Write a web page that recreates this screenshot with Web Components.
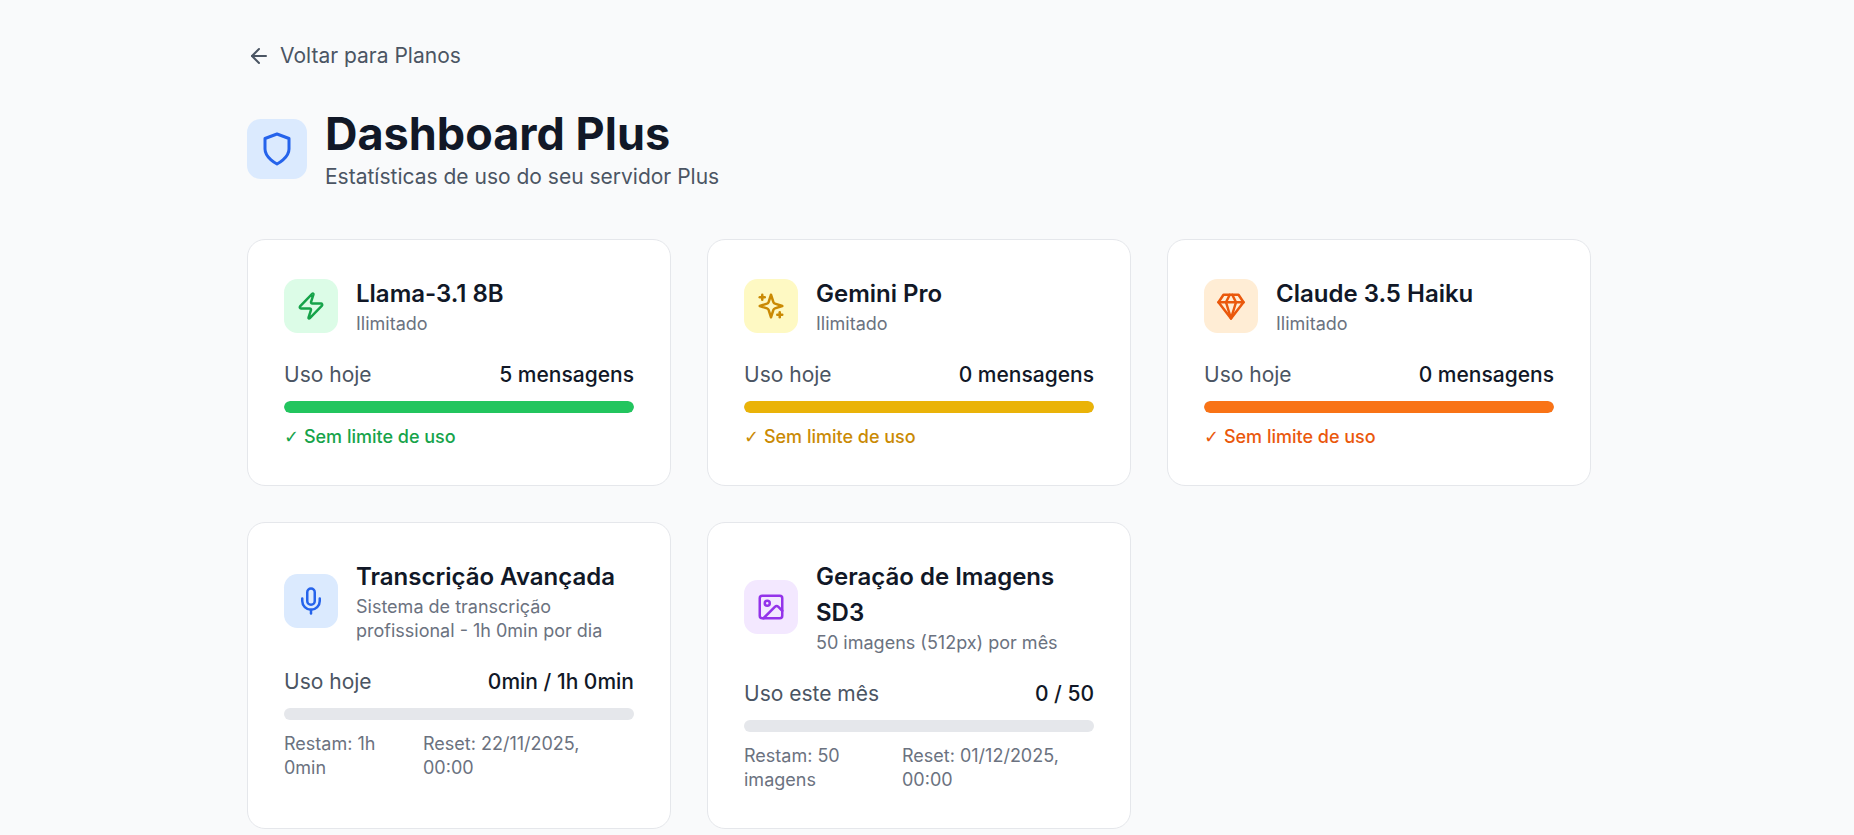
<!DOCTYPE html>
<html lang="pt-BR">

<head>
  <meta charset="UTF-8">
  <title>Dashboard Plus</title>
  <style>
    html, body { margin: 0; background: #f9fafb; }
    body { font-family: Inter, "Liberation Sans", sans-serif; color: #111827; }
  </style>
</head>

<body>
  <template id="icons">
    <svg data-name="arrow" viewBox="0 0 24 24"><path d="m12 19-7-7 7-7"/><path d="M19 12H5"/></svg>
    <svg data-name="shield" viewBox="0 0 24 24"><path d="M12 22s8-4 8-10V5l-8-3-8 3v7c0 6 8 10 8 10z"/></svg>
    <svg data-name="zap" viewBox="0 0 24 24"><path d="M4 14a1 1 0 0 1-.78-1.63l9.9-10.2a.5.5 0 0 1 .86.46l-1.92 6.02A1 1 0 0 0 13 10h7a1 1 0 0 1 .78 1.63l-9.9 10.2a.5.5 0 0 1-.86-.46l1.92-6.02A1 1 0 0 0 11 14z"/></svg>
    <svg data-name="sparkles" viewBox="0 0 24 24"><path d="m12 3-1.912 5.813a2 2 0 0 1-1.275 1.275L3 12l5.813 1.912a2 2 0 0 1 1.275 1.275L12 21l1.912-5.813a2 2 0 0 1 1.275-1.275L21 12l-5.813-1.912a2 2 0 0 1-1.275-1.275L12 3Z"/><path d="M5 3v4"/><path d="M19 17v4"/><path d="M3 5h4"/><path d="M17 19h4"/></svg>
    <svg data-name="gem" viewBox="0 0 24 24"><path d="M6 3h12l4 6-10 13L2 9Z"/><path d="M11 3 8 9l4 13 4-13-3-6"/><path d="M2 9h20"/></svg>
    <svg data-name="mic" viewBox="0 0 24 24"><path d="M12 2a3 3 0 0 0-3 3v7a3 3 0 0 0 6 0V5a3 3 0 0 0-3-3Z"/><path d="M19 10v2a7 7 0 0 1-14 0v-2"/><path d="M12 19v3"/></svg>
    <svg data-name="image" viewBox="0 0 24 24"><rect x="3" y="3" width="18" height="18" rx="2"/><circle cx="9" cy="9" r="2"/><path d="m21 15-3.086-3.086a2 2 0 0 0-2.828 0L6 21"/></svg>
  </template>

  <plus-dashboard>
    <back-link>Voltar para Planos</back-link>
    <page-header heading="Dashboard Plus">Estatísticas de uso do seu servidor Plus</page-header>
    <card-grid>
      <usage-card icon="zap" color="green" heading="Llama-3.1 8B" detail="Ilimitado" label="Uso hoje" value="5 mensagens" fill="100" note="Sem limite de uso"></usage-card>
      <usage-card icon="sparkles" color="yellow" heading="Gemini Pro" detail="Ilimitado" label="Uso hoje" value="0 mensagens" fill="100" note="Sem limite de uso"></usage-card>
      <usage-card icon="gem" color="orange" heading="Claude 3.5 Haiku" detail="Ilimitado" label="Uso hoje" value="0 mensagens" fill="100" note="Sem limite de uso"></usage-card>
      <usage-card icon="mic" color="blue" heading="Transcrição Avançada" detail="Sistema de transcrição profissional - 1h 0min por dia" label="Uso hoje" value="0min / 1h 0min" fill="0" left="Restam: 1h 0min" reset="Reset: 22/11/2025, 00:00" left-width="139"></usage-card>
      <usage-card icon="image" color="purple" heading="Geração de Imagens SD3" detail="50 imagens (512px) por mês" label="Uso este mês" value="0 / 50" fill="0" left="Restam: 50 imagens" reset="Reset: 01/12/2025, 00:00" left-width="158"></usage-card>
    </card-grid>
  </plus-dashboard>

  <script>
    const iconSource = document.getElementById('icons').content;

    function iconMarkup(name) {
      return iconSource.querySelector(`[data-name="${name}"]`).outerHTML;
    }

    class PlusDashboard extends HTMLElement {
      constructor() {
        super();
        const shadow = this.attachShadow({ mode: 'open' });
        shadow.innerHTML = `
          <style>
            :host {
              display: flex;
              flex-direction: column;
              width: 1344px;
              margin-left: 247px;
              padding-top: 42px;
            }
          </style>
          <slot></slot>
        `;
      }
    }

    class BackLink extends HTMLElement {
      constructor() {
        super();
        const shadow = this.attachShadow({ mode: 'open' });
        shadow.innerHTML = `
          <style>
            :host {
              display: flex;
              align-items: center;
              gap: 9px;
              height: 27px;
              font-size: 21px;
              color: #4b5563;
            }
            svg {
              width: 24px;
              height: 24px;
              fill: none;
              stroke: currentColor;
              stroke-width: 2;
              stroke-linecap: round;
              stroke-linejoin: round;
            }
          </style>
          ${iconMarkup('arrow')}
          <slot></slot>
        `;
      }
    }

    class PageHeader extends HTMLElement {
      constructor() {
        super();
        const shadow = this.attachShadow({ mode: 'open' });
        shadow.innerHTML = `
          <style>
            :host {
              display: flex;
              align-items: center;
              gap: 18px;
              margin-top: 38px;
              margin-bottom: 49px;
            }
            .tile {
              display: flex;
              align-items: center;
              justify-content: center;
              width: 60px;
              height: 60px;
              border-radius: 13.5px;
              background: #dbeafe;
              color: #2563eb;
            }
            svg {
              width: 36px;
              height: 36px;
              fill: none;
              stroke: currentColor;
              stroke-width: 2;
              stroke-linecap: round;
              stroke-linejoin: round;
            }
            h1 {
              margin: 0 0 2px;
              font-size: 45px;
              line-height: 54px;
              font-weight: 700;
              color: #111827;
            }
            p {
              margin: 0;
              font-size: 21px;
              line-height: 27px;
              color: #4b5563;
            }
          </style>
          <div class="tile">${iconMarkup('shield')}</div>
          <div>
            <h1></h1>
            <p><slot></slot></p>
          </div>
        `;
        shadow.querySelector('h1').textContent = this.getAttribute('heading');
      }
    }

    class CardGrid extends HTMLElement {
      constructor() {
        super();
        const shadow = this.attachShadow({ mode: 'open' });
        shadow.innerHTML = `
          <style>
            :host {
              display: grid;
              grid-template-columns: repeat(3, 1fr);
              gap: 36px;
            }
          </style>
          <slot></slot>
        `;
      }
    }

    const palette = {
      green: { tile: '#dcfce7', ink: '#16a34a', bar: '#22c55e' },
      yellow: { tile: '#fef9c3', ink: '#ca8a04', bar: '#eab308' },
      orange: { tile: '#ffedd5', ink: '#ea580c', bar: '#f97316' },
      blue: { tile: '#dbeafe', ink: '#2563eb', bar: '#3b82f6' },
      purple: { tile: '#f3e8ff', ink: '#9333ea', bar: '#a855f7' }
    };

    class UsageCard extends HTMLElement {
      constructor() {
        super();
        const shadow = this.attachShadow({ mode: 'open' });
        const colors = palette[this.getAttribute('color')];
        shadow.innerHTML = `
          <style>
            :host {
              display: flex;
              flex-direction: column;
              box-sizing: border-box;
              padding: 36px;
              background: #fff;
              border: 1px solid #e5e7eb;
              border-radius: 18px;
              --ink: ${colors.ink};
            }
            .head {
              display: flex;
              align-items: center;
              gap: 18px;
              margin-bottom: 25px;
            }
            .tile {
              flex: none;
              display: flex;
              align-items: center;
              justify-content: center;
              width: 54px;
              height: 54px;
              border-radius: 13.5px;
              background: ${colors.tile};
              color: var(--ink);
            }
            svg {
              width: 30px;
              height: 30px;
              fill: none;
              stroke: currentColor;
              stroke-width: 2;
              stroke-linecap: round;
              stroke-linejoin: round;
            }
            h3 {
              margin: 0;
              font-size: 24px;
              line-height: 36px;
              font-weight: 600;
              color: #111827;
            }
            .detail {
              font-size: 18px;
              line-height: 24px;
              color: #6b7280;
            }
            .usage {
              display: flex;
              justify-content: space-between;
              font-size: 21px;
              line-height: 27px;
              color: #4b5563;
              margin-bottom: 13px;
            }
            .usage b {
              font-weight: 500;
              color: #111827;
            }
            .track {
              height: 12px;
              border-radius: 6px;
              background: #e5e7eb;
              overflow: hidden;
              margin-bottom: 12px;
            }
            .fill {
              height: 100%;
              border-radius: 6px;
              background: ${colors.bar};
            }
            .note {
              font-size: 18px;
              line-height: 24px;
              font-weight: 500;
              color: var(--ink);
            }
            .note span {
              font-family: "DejaVu Sans", sans-serif;
              font-weight: 400;
            }
            .foot {
              display: flex;
              font-size: 18px;
              line-height: 24px;
              color: #6b7280;
            }
            .foot .left {
              box-sizing: border-box;
              flex: none;
              padding-right: 18px;
            }
            .foot .reset {
              max-width: 195px;
            }
          </style>
          <div class="head">
            <div class="tile">${iconMarkup(this.getAttribute('icon'))}</div>
            <div>
              <h3></h3>
              <div class="detail"></div>
            </div>
          </div>
          <div class="usage"><span class="label"></span><b></b></div>
          <div class="track"><div class="fill"></div></div>
        `;
        shadow.querySelector('h3').textContent = this.getAttribute('heading');
        shadow.querySelector('.detail').textContent = this.getAttribute('detail');
        shadow.querySelector('.label').textContent = this.getAttribute('label');
        shadow.querySelector('b').textContent = this.getAttribute('value');
        shadow.querySelector('.fill').style.width = `${this.getAttribute('fill')}%`;

        if (this.hasAttribute('note')) {
          const note = document.createElement('div');
          note.className = 'note';
          const check = document.createElement('span');
          check.textContent = '✓';
          note.append(check, ` ${this.getAttribute('note')}`);
          shadow.appendChild(note);
        } else {
          const foot = document.createElement('div');
          foot.className = 'foot';
          const left = document.createElement('div');
          left.className = 'left';
          left.style.width = `${this.getAttribute('left-width')}px`;
          left.textContent = this.getAttribute('left');
          const reset = document.createElement('div');
          reset.className = 'reset';
          reset.textContent = this.getAttribute('reset');
          foot.append(left, reset);
          shadow.appendChild(foot);
        }
      }
    }

    customElements.define('plus-dashboard', PlusDashboard);
    customElements.define('back-link', BackLink);
    customElements.define('page-header', PageHeader);
    customElements.define('card-grid', CardGrid);
    customElements.define('usage-card', UsageCard);
  </script>
</body>

</html>
